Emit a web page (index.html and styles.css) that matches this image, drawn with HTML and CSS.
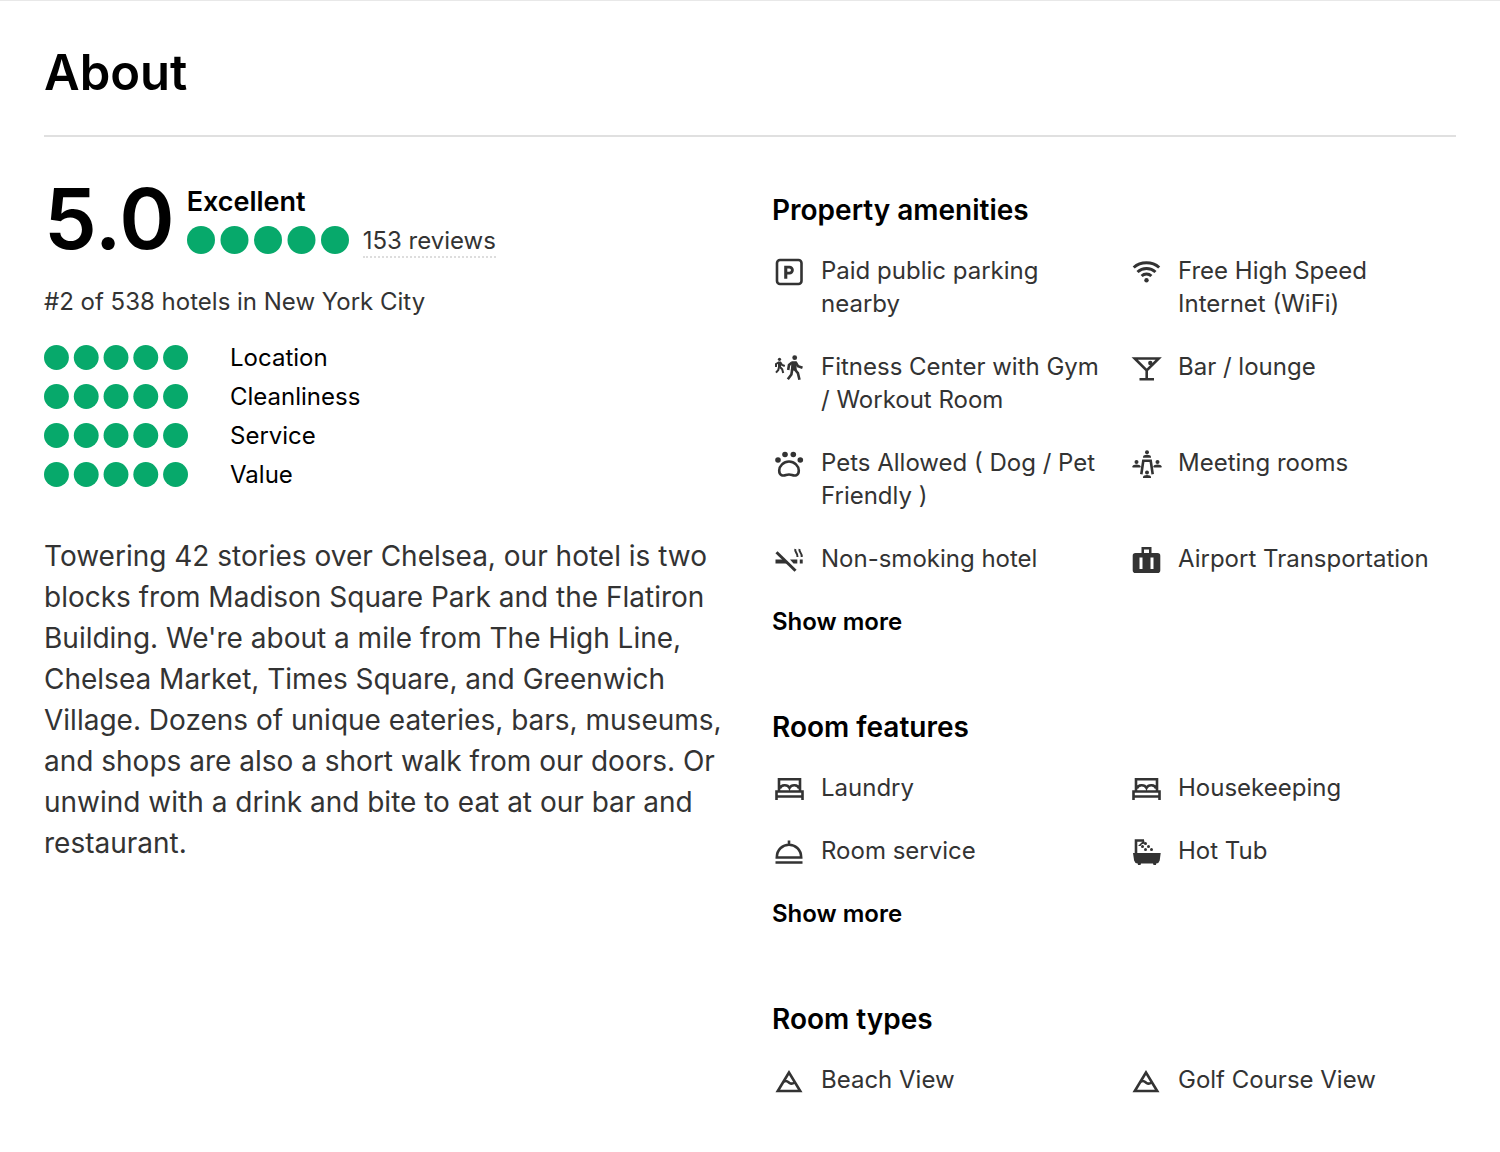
FILE: index.html
```html
<!DOCTYPE html>
<html lang="en">
<head>
<meta charset="utf-8">
<title>About</title>
<link rel="stylesheet" href="styles.css">
</head>
<body>
<svg class="defs" aria-hidden="true">
  <symbol id="dots" viewBox="0 0 162 28">
    <circle cx="14" cy="14" r="14"/><circle cx="47.500" cy="14" r="14"/><circle cx="81" cy="14" r="14"/><circle cx="114.500" cy="14" r="14"/><circle cx="148" cy="14" r="14"/>
  </symbol>
  <symbol id="bed" viewBox="0 0 32 32">
    <path class="line" d="M6 18V6.300h21V18M3.500 27V18.500h26V27M3.500 23.500h26M7 15.500c1-4 7.500-4.500 9.500-.5 2-4 8.500-3.500 9.500.5"/>
  </symbol>
  <symbol id="view" viewBox="0 0 32 32">
    <path class="line" d="M16 7.500 4.800 26h22.400zM11 16.500c3-1.500 4 .5 5.500 1.500s3 1 5-.5"/>
  </symbol>
  <symbol id="person" viewBox="0 0 8 8" overflow="visible">
    <circle cx="4" cy="2" r="2"/><path d="M0 7.500V6.300Q.5 4.500 4 4.500T8 6.300V7.500z"/>
  </symbol>
</svg>
<main class="about">
  <h1 class="title">About</h1>
  <div class="columns">
    <section class="overview">
      <div class="score">
        <span class="score-value">5.0</span>
        <div class="score-detail">
          <strong class="score-label">Excellent</strong>
          <div class="score-reviews">
            <svg class="dots-large" role="img" aria-label="5 of 5"><use href="#dots"/></svg>
            <a class="reviews" href="#reviews">153 reviews</a>
          </div>
        </div>
      </div>
      <p class="rank">#2 of 538 hotels in New York City</p>
      <ul class="ratings">
        <li class="rating"><svg class="dots-small" role="img" aria-label="5 of 5"><use href="#dots"/></svg>Location</li>
        <li class="rating"><svg class="dots-small" role="img" aria-label="5 of 5"><use href="#dots"/></svg>Cleanliness</li>
        <li class="rating"><svg class="dots-small" role="img" aria-label="5 of 5"><use href="#dots"/></svg>Service</li>
        <li class="rating"><svg class="dots-small" role="img" aria-label="5 of 5"><use href="#dots"/></svg>Value</li>
      </ul>
      <p class="description">Towering 42 stories over Chelsea, our hotel is two<br>blocks from Madison Square Park and the Flatiron<br>Building. We're about a mile from The High Line,<br>Chelsea Market, Times Square, and Greenwich<br>Village. Dozens of unique eateries, bars, museums,<br>and shops are also a short walk from our doors. Or<br>unwind with a drink and bite to eat at our bar and<br>restaurant.</p>
    </section>
    <div class="features">
      <section class="group">
        <h2 class="group-title">Property amenities</h2>
        <ul class="items">
          <li class="item"><svg class="icon" viewBox="0 0 32 32"><rect class="line" x="4" y="4" width="24.500" height="24" rx="3"/><path fill-rule="evenodd" d="M11.200 9.700h5.300a4.300 4.300 0 0 1 0 8.700h-2.200v4.300h-3.100zm3.100 2.700v3.400h2a1.700 1.700 0 0 0 0-3.400z"/></svg><span>Paid public parking<br>nearby</span></li>
          <li class="item"><svg class="icon" viewBox="0 0 32 32"><path class="thick" d="M3.700 11.500c7-6.300 18.500-6.300 25.500 0M7.500 16c5-4.600 13-4.600 18 0M11.600 20c2.800-2.600 7-2.600 9.800 0"/><circle cx="16.500" cy="24.300" r="2.200"/></svg><span>Free High Speed<br>Internet (WiFi)</span></li>
          <li class="item"><svg class="icon" viewBox="0 0 32 32"><circle cx="6.500" cy="7.300" r="1.600"/><path d="M5 9.500h3v6H5z"/><path class="thin" d="M5.500 10.500 3 12v3M7.500 10.500l1.600 2.500 2.700 1M6 15l-.7 3-2.300 2.600M7 15l2.200 2.200 1 3.800"/><circle cx="21.700" cy="5.700" r="2.400"/><path d="M18.500 9.200h4.700l.6 9.300h-6z"/><path class="line" d="m19 10.500-3 2.500-.8 5M22.500 10l2.500 4.200 4.500 1.600M19.200 17.500l-.8 5-3.600 4.700M21.500 17l3.400 4.200 1.600 6.500"/></svg><span>Fitness Center with Gym<br>/ Workout Room</span></li>
          <li class="item"><svg class="icon" viewBox="0 0 32 32"><path class="line" d="M4.700 6.500h24L16.700 18.500zM16.700 18v9M9.500 27.200h14.500"/><circle cx="20.300" cy="11" r="2.200"/></svg><span>Bar / lounge</span></li>
          <li class="item"><svg class="icon" viewBox="0 0 32 32"><circle cx="5" cy="12" r="2.800"/><circle cx="12" cy="6.500" r="2.800"/><circle cx="20.300" cy="6.500" r="2.800"/><circle cx="27.300" cy="12" r="2.800"/><path class="line" d="M16 13.500c-5.500 0-9.800 4.700-9.800 9 0 5.500 4.300 5.500 6.800 4.500 2-.7 4-.7 6 0 2.500 1 6.800 1 6.800-4.500 0-4.300-4.300-9-9.800-9z"/></svg><span>Pets Allowed ( Dog / Pet<br>Friendly )</span></li>
          <li class="item"><svg class="icon" viewBox="0 0 32 32"><path class="line" d="M11.300 26.300 13.300 12.700h7.400L22.700 26.300"/><use href="#person" x="13" y="2.200" width="8" height="8"/><use href="#person" x="2.500" y="12" width="8" height="8"/><use href="#person" x="23.500" y="12" width="8" height="8"/><use href="#person" x="13" y="22.500" width="8" height="8"/></svg><span>Meeting rooms</span></li>
          <li class="item"><svg class="icon" viewBox="0 0 32 32"><path d="M2.500 15.500h9l4 4h-13zM17 15.500h7.300v4h-3.800zM26.800 15.500h2.900v4h-2.900z"/><path class="thick" d="m3.500 8.300 19 18.500"/><path class="thin" d="M22.300 5c-.8 3.500 2.500 3.500 2.200 8M26.500 5c-.8 3.500 2.700 3.500 2.200 8"/></svg><span>Non-smoking hotel</span></li>
          <li class="item"><svg class="icon" viewBox="0 0 32 32"><path fill-rule="evenodd" d="M11.500 9V3h10v6h6q2.800 0 2.800 2.800v14.400Q30.300 29 27.500 29H5.500q-2.800 0-2.800-2.800V11.800Q2.700 9 5.500 9zm2.500 0h5V5.500h-5zM9.500 13.500V25h3V13.500zm11 0V25h3V13.500z"/></svg><span>Airport Transportation</span></li>
        </ul>
        <button class="more" type="button">Show more</button>
      </section>
      <section class="group">
        <h2 class="group-title">Room features</h2>
        <ul class="items">
          <li class="item"><svg class="icon"><use href="#bed"/></svg><span>Laundry</span></li>
          <li class="item"><svg class="icon"><use href="#bed"/></svg><span>Housekeeping</span></li>
          <li class="item"><svg class="icon" viewBox="0 0 32 32"><path class="line" d="M3.800 21.500C4 4.500 28 4.500 28.200 21.500zM16 9V4.500M2.500 26.500h27"/></svg><span>Room service</span></li>
          <li class="item"><svg class="icon" viewBox="0 0 32 32"><path d="M3 17h27.700l-1 7.500q-.7 2.800-3.500 3L26 29h-2.500l-.5-1.500H11l-.5 1.500H8l-.3-1.500q-3-.3-3.600-3z"/><path class="line" d="M6 18V4.500h8"/><path d="m8 10 6-6 1 4q-3-1-4.500 2z"/><circle cx="15.500" cy="7.500" r="1.500"/><circle cx="12.500" cy="10.500" r="1.500"/><circle cx="18.500" cy="10.500" r="1.500"/><circle cx="15.500" cy="13.500" r="1.500"/><circle cx="21.500" cy="13.500" r="1.500"/></svg><span>Hot Tub</span></li>
        </ul>
        <button class="more" type="button">Show more</button>
      </section>
      <section class="group">
        <h2 class="group-title">Room types</h2>
        <ul class="items">
          <li class="item"><svg class="icon"><use href="#view"/></svg><span>Beach View</span></li>
          <li class="item"><svg class="icon"><use href="#view"/></svg><span>Golf Course View</span></li>
        </ul>
      </section>
    </div>
  </div>
</main>
</body>
</html>
```
FILE: styles.css
```css
* { box-sizing: border-box; }
body {
  margin: 0;
  background: #fff;
  color: #333;
  font-family: Inter, "Liberation Sans", sans-serif;
  font-size: 24px;
  line-height: 33px;
}
h1, h2, p, ul { margin: 0; padding: 0; }
ul { list-style: none; }
.defs { display: block; width: 0; height: 0; }
.about {
  padding: 36px 44px 52px;
  border-top: 1px solid #e8e8e8;
}
.title {
  padding-bottom: 26px;
  border-bottom: 2px solid #e0e0e0;
  color: #000;
  font-size: 49px;
  font-weight: 600;
  line-height: 72px;
}
.columns {
  display: grid;
  grid-template-columns: 1fr 1fr;
  gap: 44px;
  padding-top: 43px;
}
.overview, .features { min-width: 0; }
.features { padding-top: 12px; }
.score {
  display: flex;
  align-items: flex-start;
  gap: 12px;
  height: 80px;
}
.score-value {
  color: #000;
  font-size: 84px;
  font-weight: 600;
  line-height: 78px;
}
.score-label {
  display: block;
  padding-top: 5px;
  color: #000;
  font-size: 27px;
  font-weight: 600;
  line-height: 33px;
}
.score-reviews {
  display: flex;
  align-items: flex-start;
  gap: 14px;
  padding-top: 8px;
}
.dots-large, .dots-small { display: block; fill: #07a96b; }
.dots-large { width: 162px; height: 28px; }
.reviews {
  border-bottom: 2px dotted #ddd;
  color: #333;
  line-height: 30px;
  text-decoration: none;
}
.rank { padding-top: 25px; }
.ratings { padding-top: 20px; color: #000; }
.rating {
  display: flex;
  align-items: center;
  gap: 42px;
  line-height: 39px;
}
.dots-small { width: 144px; height: 25px; }
.description {
  padding-top: 42px;
  font-size: 28px;
  line-height: 41px;
  white-space: nowrap;
}
.group + .group { padding-top: 71px; }
.group-title {
  color: #000;
  font-size: 28px;
  font-weight: 600;
  line-height: 36px;
}
.items {
  display: grid;
  grid-template-columns: 1fr 1fr;
  gap: 30px;
  padding-top: 26px;
}
.item {
  display: flex;
  align-items: flex-start;
  gap: 16px;
  min-width: 0;
  white-space: nowrap;
}
.icon {
  flex: none;
  width: 32px;
  height: 32px;
  margin: 2px 0 -1px 1px;
  fill: #333;
}
.line, .thick, .thin { fill: none; stroke: #333; stroke-width: 2.6; }
.thick { stroke-width: 3; }
.thin { stroke-width: 2; }
.more {
  display: block;
  margin-top: 30px;
  padding: 0;
  border: 0;
  background: none;
  color: #000;
  font: inherit;
  font-weight: 600;
}
```
